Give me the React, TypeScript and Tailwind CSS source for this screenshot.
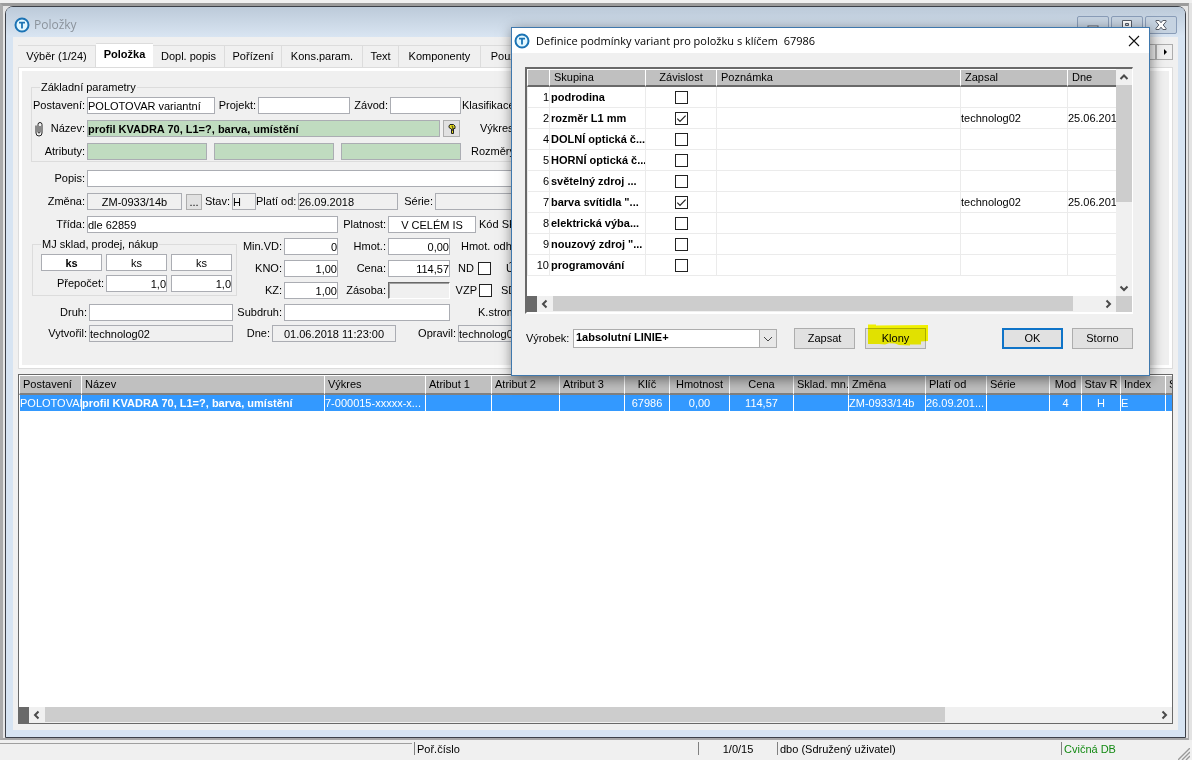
import React from "react";

type FieldProps = {
  id: string;
  label?: string;
  value?: string;
  labelClass?: string;
  inputClass?: string;
  hiddenLabel?: string;
};

function Field({ id, label, value = "", labelClass = "", inputClass = "", hiddenLabel }: FieldProps) {
  return (
    <>
      {label && (
        <label htmlFor={id} className={"shrink-0 pr-0.5 text-right whitespace-nowrap " + labelClass}>
          {label}
        </label>
      )}
      <input
        id={id}
        aria-label={hiddenLabel}
        defaultValue={value}
        className={"h-[17px] min-w-0 rounded-none border border-[#abadb3] outline-none " + inputClass}
      />
    </>
  );
}

function Logo() {
  return (
    <svg viewBox="0 0 16 16" className="size-4 shrink-0" aria-hidden="true">
      <circle cx="8" cy="8" r="6.5" fill="#e4f8ff" stroke="#1b73b4" strokeWidth="2" />
      <path d="M5 5.6h6M8 5.6v6" fill="none" stroke="#1b73b4" strokeWidth="1.8" />
    </svg>
  );
}

function Check({ id, label, checked = false }: { id: string; label?: string; checked?: boolean }) {
  return (
    <span className="inline-grid size-[13px] shrink-0 align-middle">
      <input
        id={id}
        type="checkbox"
        aria-label={label}
        defaultChecked={checked}
        className="peer col-start-1 row-start-1 size-[13px] appearance-none border border-[#222] bg-white"
      />
      <svg
        viewBox="0 0 13 13"
        aria-hidden="true"
        className="pointer-events-none invisible col-start-1 row-start-1 size-[13px] peer-checked:visible"
      >
        <path d="M2.3 6.6l2.7 2.8 5.6-5.8" fill="none" stroke="#222" strokeWidth="1.2" />
      </svg>
    </span>
  );
}

const chevrons = {
  up: "M4.5 10L8 6.5l3.5 3.5",
  down: "M4.5 6.5L8 10l3.5-3.5",
  left: "M9.5 4.5L6 8l3.5 3.5",
  right: "M6.5 4.5L10 8l-3.5 3.5",
};

function ScrollButton({ dir, label }: { dir: keyof typeof chevrons; label: string }) {
  return (
    <button type="button" aria-label={label} className="size-4 shrink-0 bg-[#f0f0f0]">
      <svg viewBox="0 0 16 16" className="size-4" aria-hidden="true">
        <path d={chevrons[dir]} fill="none" stroke="#4a4a4a" strokeWidth="2" />
      </svg>
    </button>
  );
}

const tabs = [
  { name: "Výběr (1/24)", width: "w-[78px]" },
  { name: "Položka", width: "w-[57px]" },
  { name: "Dopl. popis", width: "w-[72px]" },
  { name: "Pořízení", width: "w-[57px]" },
  { name: "Kons.param.", width: "w-[81px]" },
  { name: "Text", width: "w-9" },
  { name: "Komponenty", width: "w-[82px]" },
  { name: "Použití", width: "w-[54px]" },
];

const columns = [
  { name: "Postavení", width: "w-[62px]", value: "POLOTOVAR", cell: "" },
  { name: "Název", width: "w-[243px]", value: "profil KVADRA 70, L1=?, barva, umístění", cell: "font-bold" },
  { name: "Výkres", width: "w-[101px]", value: "7-000015-xxxxx-x...", cell: "" },
  { name: "Atribut 1", width: "w-[66px]", value: "", cell: "" },
  { name: "Atribut 2", width: "w-[68px]", value: "", cell: "" },
  { name: "Atribut 3", width: "w-[65px]", value: "", cell: "" },
  { name: "Klíč", width: "w-[45px]", value: "67986", cell: "text-center" },
  { name: "Hmotnost", width: "w-[60px]", value: "0,00", cell: "text-center" },
  { name: "Cena", width: "w-16", value: "114,57", cell: "text-center" },
  { name: "Sklad. mn.", width: "w-[55px]", value: "", cell: "" },
  { name: "Změna", width: "w-[77px]", value: "ZM-0933/14b", cell: "" },
  { name: "Platí od", width: "w-[61px]", value: "26.09.201...", cell: "" },
  { name: "Série", width: "w-[63px]", value: "", cell: "" },
  { name: "Mod", width: "w-8", value: "4", cell: "text-center" },
  { name: "Stav R", width: "w-[39px]", value: "H", cell: "text-center" },
  { name: "Index", width: "w-[45px]", value: "E", cell: "" },
  { name: "S", width: "w-[60px]", value: "", cell: "" },
];

const groups = [
  { no: 1, name: "podrodina", on: false, by: "", date: "" },
  { no: 2, name: "rozměr L1 mm", on: true, by: "technolog02", date: "25.06.2018" },
  { no: 4, name: "DOLNÍ optická č...", on: false, by: "", date: "" },
  { no: 5, name: "HORNÍ optická č...", on: false, by: "", date: "" },
  { no: 6, name: "světelný zdroj ...", on: false, by: "", date: "" },
  { no: 7, name: 'barva svítidla "...', on: true, by: "technolog02", date: "25.06.2018" },
  { no: 8, name: "elektrická výba...", on: false, by: "", date: "" },
  { no: 9, name: 'nouzový zdroj "...', on: false, by: "", date: "" },
  { no: 10, name: "programování", on: false, by: "", date: "" },
];

function TitleBar() {
  return (
    <header className="flex h-[30px] shrink-0 items-start justify-between rounded-t-md bg-linear-to-b from-[#bccad9] to-[#d9e5f2] pr-2 pl-2">
      <h1 className="flex items-center gap-1 pt-2 font-['Open_Sans',sans-serif] text-[12px] leading-5 text-[#8b939c]">
        <Logo />
        Položky
      </h1>
      <div className="flex gap-0.5 pt-[9px]">
        <button type="button" aria-label="Minimalizovat" className="grid h-[18px] w-8 place-items-center rounded-xs border border-[#8a9db8] bg-[#c6d3e1]">
          <svg viewBox="0 0 12 12" className="size-3" aria-hidden="true">
            <rect x="1" y="7" width="10" height="3" fill="#fff" stroke="#555b66" />
          </svg>
        </button>
        <button type="button" aria-label="Maximalizovat" className="grid h-[18px] w-8 place-items-center rounded-xs border border-[#8a9db8] bg-[#c6d3e1]">
          <svg viewBox="0 0 12 12" className="size-3" aria-hidden="true">
            <path d="M1.500 1.500h9v8h-9zM4.500 4.500v2h3v-2z" fill="#fff" fillRule="evenodd" stroke="#555b66" />
          </svg>
        </button>
        <button type="button" aria-label="Zavřít" className="grid h-[18px] w-8 place-items-center rounded-xs border border-[#8a9db8] bg-[#c6d3e1]">
          <svg viewBox="0 0 12 12" className="size-3" aria-hidden="true">
            <path
              d="M1 1.500h3.200L6 3.800l1.800-2.300H11v1.200L8.200 6 11 9.300v1.200H7.800L6 8.200l-1.800 2.300H1V9.300L3.800 6 1 2.700z"
              fill="#fff"
              stroke="#555b66"
            />
          </svg>
        </button>
      </div>
    </header>
  );
}

function TabStrip() {
  return (
    <nav className="flex h-6 shrink-0 items-end overflow-hidden" aria-label="Záložky">
      {tabs.map((tab) =>
        tab.name === "Položka" ? (
          <button key={tab.name} type="button" className={"h-6 shrink-0 border-t border-[#dcdcdc] bg-white pb-0.5 text-center font-bold " + tab.width}>
            {tab.name}
          </button>
        ) : (
          <button key={tab.name} type="button" className={"h-[22px] shrink-0 border-t border-r border-[#dcdcdc] text-center whitespace-nowrap " + tab.width}>
            {tab.name}
          </button>
        ),
      )}
      <div className="h-[22px] flex-1 border-t border-[#dcdcdc]" />
      <div className="flex self-start pt-px">
        <button type="button" aria-label="Předchozí záložky" className="grid h-4 w-[17px] place-items-center border border-[#adadad]">
          <svg viewBox="0 0 8 8" className="size-2" aria-hidden="true"><path d="M6 1v6L3 4z" fill="#000" /></svg>
        </button>
        <button type="button" aria-label="Další záložky" className="grid h-4 w-[17px] place-items-center border border-[#adadad]">
          <svg viewBox="0 0 8 8" className="size-2" aria-hidden="true"><path d="M3 1v6l3-3z" fill="#000" /></svg>
        </button>
      </div>
    </nav>
  );
}

function ItemForm() {
  return (
    <form className="flex shrink-0 flex-col gap-1 overflow-hidden border border-[#dcdcdc] bg-[#f0f0f0] pb-[26px] whitespace-nowrap shadow-[inset_0_0_0_3px_#fff]">
      <div className="flex flex-col gap-1.5 pt-3 pr-9 pl-[3px]">
        <fieldset className="ml-[9px] flex min-w-0 flex-col gap-1.5 border border-[#dcdcdc] pt-0.5 pb-px">
          <legend className="ml-2 px-px leading-[15px]">Základní parametry</legend>
          <div className="flex items-center">
            <Field id="postaveni" label="Postavení:" value="POLOTOVAR variantní" labelClass="w-[55px]" inputClass="w-32 bg-white" />
            <Field id="projekt" label="Projekt:" labelClass="w-[43px]" inputClass="w-[92px] bg-white" />
            <Field id="zavod" label="Závod:" labelClass="w-10" inputClass="w-[71px] bg-white" />
            <Field id="klasifikace" label="Klasifikace:" labelClass="pl-px" inputClass="flex-1 bg-white" />
          </div>
          <div className="flex items-center">
            <div className="flex w-[55px] shrink-0 items-center justify-between pl-[3px]">
              <svg viewBox="0 0 8 16" className="h-4 w-2" fill="none" stroke="#222" aria-hidden="true">
                <path d="M1 4.500v7.500a3 3 0 0 0 6 0V3.500a2 2 0 0 0-4 0V11a1 1 0 0 0 2 0V5" />
              </svg>
              <label htmlFor="nazev" className="pr-0.5">Název:</label>
            </div>
            <Field id="nazev" value="profil KVADRA 70, L1=?, barva, umístění" inputClass="w-[353px] bg-[#c0dcc0] font-bold" />
            <button type="button" aria-label="Klíč položky" className="ml-[3px] grid size-[17px] shrink-0 place-items-center border border-[#adadad] bg-[#e1e1e1]">
              <svg viewBox="0 0 10 12" className="h-3 w-2.5" aria-hidden="true">
                <path d="M3 1.500h3.500L8 3v2.500H6.500v5H4.500V6L2 4.500V3z" fill="#e8dc1c" stroke="#222" />
                <path d="M4.500 3.200h1.200V8" fill="none" stroke="#222" strokeWidth="0.8" />
              </svg>
            </button>
            <Field id="vykres" label="Výkres:" labelClass="pl-5" inputClass="flex-1 bg-white" />
          </div>
          <div className="flex items-center">
            <Field id="atribut1" label="Atributy:" labelClass="w-[55px]" inputClass="w-[120px] bg-[#c0dcc0]" />
            <Field id="atribut2" hiddenLabel="Atribut 2" inputClass="ml-[7px] w-[120px] bg-[#c0dcc0]" />
            <Field id="atribut3" hiddenLabel="Atribut 3" inputClass="ml-[7px] w-[120px] bg-[#c0dcc0]" />
            <Field id="rozmery" label="Rozměry:" labelClass="pl-2.5" inputClass="flex-1 bg-white" />
          </div>
        </fieldset>
        <div className="mt-0.5 flex items-center">
          <Field id="popis" label="Popis:" labelClass="w-[65px]" inputClass="flex-1 bg-white" />
        </div>
        <div className="flex items-center">
          <Field id="zmena" label="Změna:" value="ZM-0933/14b" labelClass="w-[65px]" inputClass="w-[95px] text-center" />
          <button type="button" className="ml-1 h-4 w-4 shrink-0 border border-[#adadad] bg-[#e1e1e1] leading-3">...</button>
          <Field id="stav" label="Stav:" value="H" labelClass="w-[30px]" inputClass="w-6" />
          <Field id="plati" label="Platí od:" value="26.09.2018" labelClass="w-[42px]" inputClass="w-[100px]" />
          <Field id="serie" label="Série:" labelClass="w-[37px]" inputClass="flex-1" />
        </div>
        <div className="flex items-center">
          <Field id="trida" label="Třída:" value="dle 62859" labelClass="w-[65px]" inputClass="w-[251px] bg-white" />
          <Field id="platnost" label="Platnost:" value="V CELÉM IS" labelClass="w-[50px]" inputClass="w-[88px] bg-white text-center" />
          <Field id="kod" label="Kód SK:" labelClass="pl-[3px]" inputClass="flex-1 bg-white" />
        </div>
      </div>

      <div className="flex items-start pl-[3px]">
        <fieldset className="ml-2.5 flex w-[205px] shrink-0 flex-col gap-1 border border-[#dcdcdc] pb-[3px] pl-2">
          <legend className="ml-0 px-px leading-[15px]">MJ sklad, prodej, nákup</legend>
          <div className="flex gap-1 pt-0.5">
            <Field id="mj1" hiddenLabel="MJ sklad" value="ks" inputClass="w-[61px] bg-white text-center font-bold" />
            <Field id="mj2" hiddenLabel="MJ prodej" value="ks" inputClass="w-[61px] bg-white text-center" />
            <Field id="mj3" hiddenLabel="MJ nákup" value="ks" inputClass="w-[61px] bg-white text-center" />
          </div>
          <div className="flex items-center">
            <Field id="prepocet1" label="Přepočet:" value="1,0" labelClass="w-[65px]" inputClass="w-[61px] bg-white text-right" />
            <Field id="prepocet2" hiddenLabel="Přepočet nákup" value="1,0" inputClass="ml-1 w-[61px] bg-white text-right" />
          </div>
        </fieldset>
        <div className="flex flex-col gap-[5px] pt-px">
          <div className="flex items-center">
            <Field id="minvd" label="Min.VD:" value="0" labelClass="w-[47px]" inputClass="w-[54px] bg-white text-right" />
            <Field id="hmot" label="Hmot.:" value="0,00" labelClass="w-[50px]" inputClass="w-[62px] bg-white text-right" />
            <Field id="odhad" label="Hmot. odhad:" labelClass="pl-[11px]" inputClass="w-20 bg-white" />
          </div>
          <div className="flex items-center">
            <Field id="kno" label="KNO:" value="1,00" labelClass="w-[47px]" inputClass="w-[54px] bg-white text-right" />
            <Field id="cena" label="Cena:" value="114,57" labelClass="w-[50px]" inputClass="w-[62px] bg-white text-right" />
            <label htmlFor="nd" className="w-7 pr-1 text-right">ND</label>
            <Check id="nd" />
            <label htmlFor="uc" className="w-[23px] pl-[15px]">Ú</label>
            <Check id="uc" />
          </div>
          <div className="flex items-center">
            <Field id="kz" label="KZ:" value="1,00" labelClass="w-[47px]" inputClass="w-[54px] bg-white text-right" />
            <Field id="zasoba" label="Zásoba:" labelClass="w-[50px]" inputClass="w-[62px] border-t-[#696969] border-l-[#696969] border-r-white border-b-white shadow-[inset_1px_1px_0_#a0a0a0]" />
            <label htmlFor="vzp" className="w-[29px] pr-0.5 text-right">VZP</label>
            <Check id="vzp" />
            <label htmlFor="sd" className="w-[27px] pl-[9px]">SD</label>
            <Check id="sd" />
          </div>
        </div>
      </div>

      <div className="flex flex-col gap-1 pt-px pr-9 pl-[3px]">
        <div className="flex items-center">
          <Field id="druh" label="Druh:" labelClass="w-[67px]" inputClass="w-36 bg-white" />
          <Field id="subdruh" label="Subdruh:" labelClass="w-[51px]" inputClass="w-[166px] bg-white" />
          <Field id="kstrom" label="K.strom:" labelClass="pl-7" inputClass="flex-1 bg-white" />
        </div>
        <div className="flex items-center">
          <Field id="vytvoril" label="Vytvořil:" value="technolog02" labelClass="w-[67px]" inputClass="w-36" />
          <Field id="dne" label="Dne:" value="01.06.2018 11:23:00" labelClass="w-[39px]" inputClass="w-[124px] text-center" />
          <Field id="opravil" label="Opravil:" value="technolog02" labelClass="w-[62px]" inputClass="flex-1" />
        </div>
      </div>
    </form>
  );
}

function ItemGrid() {
  return (
    <section className="mt-[5px] flex min-h-0 flex-1 flex-col border border-[#696969] bg-white">
      <div className="min-h-0 flex-1 overflow-hidden">
        <table className="w-[1206px] table-fixed border-separate border-spacing-0">
          <thead>
            <tr>
              {columns.map((c) => (
                <th
                  key={c.name}
                  scope="col"
                  className={
                    "h-5 overflow-hidden border-t border-b-2 border-l border-t-white border-b-[#808080] border-l-white bg-[#c0c0c0] p-0 font-normal whitespace-nowrap " +
                    (c.cell === "text-center" ? "text-center " : "pl-[3px] text-left ") +
                    c.width
                  }
                >
                  {c.name}
                </th>
              ))}
            </tr>
          </thead>
          <tbody>
            <tr>
              {columns.map((c) => (
                <td key={c.name} className={"h-4 overflow-hidden border-l border-white bg-[#3399ff] p-0 leading-[15px] whitespace-nowrap text-white " + c.cell}>
                  {c.value}
                </td>
              ))}
            </tr>
          </tbody>
        </table>
      </div>
      <div className="flex h-4 shrink-0 bg-[#f0f0f0]">
        <div className="w-2.5 bg-[#696969]" />
        <ScrollButton dir="left" label="Posunout doleva" />
        <div className="flex-1">
          <div className="h-[15px] w-[81%] bg-[#cdcdcd]" />
        </div>
        <ScrollButton dir="right" label="Posunout doprava" />
      </div>
    </section>
  );
}

const head =
  "h-[18px] overflow-hidden border-t border-b-2 border-l border-t-white border-b-[#696969] border-l-white bg-[#c0c0c0] p-0 px-1 font-normal whitespace-nowrap";
const cell = "h-[21px] overflow-hidden border-b border-l border-[#ebebeb] p-0 whitespace-nowrap";
const action = "h-[21px] w-[61px] border border-[#adadad] bg-[#e1e1e1] text-center";

function VariantDialog() {
  return (
    <div
      role="dialog"
      aria-labelledby="dialog-title"
      className="absolute top-[27px] left-[511px] flex w-[639px] flex-col border border-[#3f78ad] bg-[#f0f0f0] pb-[26px] shadow-[1px_3px_12px_rgba(0,0,0,0.5)]"
    >
      <header className="flex h-[25px] items-center justify-between bg-white pr-2 pl-0.5">
        <h2 id="dialog-title" className="flex items-center gap-1.5 font-['Open_Sans',sans-serif] text-[11px] whitespace-pre">
          <Logo />
          {"Definice podmínky variant pro položku s klíčem  67986"}
        </h2>
        <button type="button" aria-label="Zavřít dialog" className="size-3.5">
          <svg viewBox="0 0 14 14" className="size-3.5" aria-hidden="true">
            <path d="M2 2l10 10M12 2L2 12" stroke="#111" strokeWidth="1.1" />
          </svg>
        </button>
      </header>

      <div className="mt-3.5 mr-4 ml-[13px] flex flex-col border-t-2 border-r border-b-2 border-l-2 border-t-[#696969] border-r-white border-b-white border-l-[#696969] bg-white">
        <div className="flex h-[227px]">
          <div className="min-w-0 flex-1 overflow-hidden">
            <table className="w-[620px] table-fixed border-separate border-spacing-0">
              <thead>
                <tr>
                  <th className={head + " w-[22px]"} aria-label="Číslo" />
                  <th scope="col" className={head + " w-24 text-left"}>Skupina</th>
                  <th scope="col" className={head + " w-[71px] text-center"}>Závislost</th>
                  <th scope="col" className={head + " w-[244px] text-left"}>Poznámka</th>
                  <th scope="col" className={head + " w-[107px] text-left"}>Zapsal</th>
                  <th scope="col" className={head + " w-20 text-left"}>Dne</th>
                </tr>
              </thead>
              <tbody>
                {groups.map((g) => (
                  <tr key={g.no}>
                    <td className={cell + " text-right"}>{g.no}</td>
                    <td className={cell + " pl-px font-bold"}>{g.name}</td>
                    <td className={cell + " text-center leading-none"}>
                      <Check id={"zavislost-" + g.no} label={"Závislost " + g.name} checked={g.on} />
                    </td>
                    <td className={cell} />
                    <td className={cell}>{g.by}</td>
                    <td className={cell}>{g.date}</td>
                  </tr>
                ))}
              </tbody>
            </table>
          </div>
          <div className="flex w-4 shrink-0 flex-col bg-[#f0f0f0]">
            <ScrollButton dir="up" label="Posunout nahoru" />
            <div className="flex-1">
              <div className="h-[60%] bg-[#cdcdcd]" />
            </div>
            <ScrollButton dir="down" label="Posunout dolů" />
          </div>
        </div>
        <div className="flex h-4 bg-[#f0f0f0]">
          <div className="w-2.5 bg-[#696969]" />
          <ScrollButton dir="left" label="Posunout tabulku doleva" />
          <div className="flex-1">
            <div className="h-[15px] w-[95%] bg-[#cdcdcd]" />
          </div>
          <ScrollButton dir="right" label="Posunout tabulku doprava" />
          <div className="w-4 bg-[#cdcdcd]" />
        </div>
      </div>

      <div className="mt-3.5 mr-4 ml-[14px] flex items-center">
        <label htmlFor="vyrobek" className="w-[47px]">Výrobek:</label>
        <div className="grid w-[204px]">
          <select id="vyrobek" className="col-start-1 row-start-1 h-[19px] appearance-none rounded-none border border-[#adadad] bg-white pr-5 pb-[3px] pl-0.5 font-bold outline-none">
            <option>1absolutní LINIE+</option>
          </select>
          <span className="pointer-events-none col-start-1 row-start-1 grid h-[19px] w-[18px] place-items-center justify-self-end border border-[#adadad] bg-[#e8e8e8]">
            <svg viewBox="0 0 10 10" className="size-2.5" aria-hidden="true">
              <path d="M1 3l4 4 4-4" fill="none" stroke="#444" />
            </svg>
          </span>
        </div>
        <button type="button" className={action + " ml-[17px]"}>Zapsat</button>
        <button type="button" className={action + " relative ml-2.5"}>
          Klony
          <svg viewBox="0 0 64 24" className="absolute -top-1.5 left-0 h-6 w-16 mix-blend-multiply" aria-hidden="true">
            <path d="M2 1.500h8v1l52-.5v16l-7 .5v3H44v1l-11-.5-4-1.500-6-.2-4 1.200-6-.5H2z" fill="#ffff00" />
          </svg>
        </button>
        <button type="button" className="ml-auto h-[21px] w-[61px] border-2 border-[#0f74c8] bg-[#e1e1e1] text-center">OK</button>
        <button type="button" className={action + " ml-[9px]"}>Storno</button>
      </div>
    </div>
  );
}

function StatusBar() {
  return (
    <footer className="flex h-5 shrink-0 items-start pt-0.5 leading-[15px]">
      <div className="mt-px h-px w-[412px] bg-[#a0a0a0]" />
      <div className="ml-0.5 h-[13px] w-[284px] border-l border-[#808080] pl-0.5">Poř.číslo</div>
      <div className="h-[13px] w-[79px] border-l border-[#808080] text-center">1/0/15</div>
      <div className="h-[13px] w-[284px] border-l border-[#808080] pl-0.5">dbo (Sdružený uživatel)</div>
      <div className="h-[13px] flex-1 border-l border-[#808080] pl-0.5 text-[#138a13]">Cvičná DB</div>
      <svg viewBox="0 0 12 12" className="mr-0.5 size-3 self-end" aria-hidden="true">
        <path d="M0 12L12 0M4 12l8-8M8 12l4-4" stroke="#9a9a9a" strokeWidth="1.4" />
      </svg>
    </footer>
  );
}

export default function App() {
  return (
    <div className="relative flex h-screen flex-col overflow-hidden bg-[#f0f0f0] font-['Liberation_Sans',Arial,sans-serif] text-[11px] leading-[15px] text-black">
      <div className="mt-[3px] flex min-h-0 flex-1 border-r-[3px] border-[#e3e3e3]">
        <div className="flex min-h-0 min-w-0 flex-1 border-t-[3px] border-r border-b-2 border-l-[3px] border-t-[#9c9c9c] border-r-[#ababab] border-b-[#a6a6a6] border-l-[#ababab] bg-[#e6e6e6] pr-0.5 pl-0.5">
          <main className="flex min-w-0 flex-1 flex-col rounded-t-lg border border-[#3c4048] bg-[#d7e4f2]">
            <TitleBar />
            <div className="mx-[7px] mb-[7px] flex min-h-0 flex-1 flex-col bg-[#f0f0f0] px-[5px] pt-1.5 pb-1.5">
              <TabStrip />
              <ItemForm />
              <ItemGrid />
            </div>
          </main>
        </div>
      </div>
      <StatusBar />
      <VariantDialog />
    </div>
  );
}
